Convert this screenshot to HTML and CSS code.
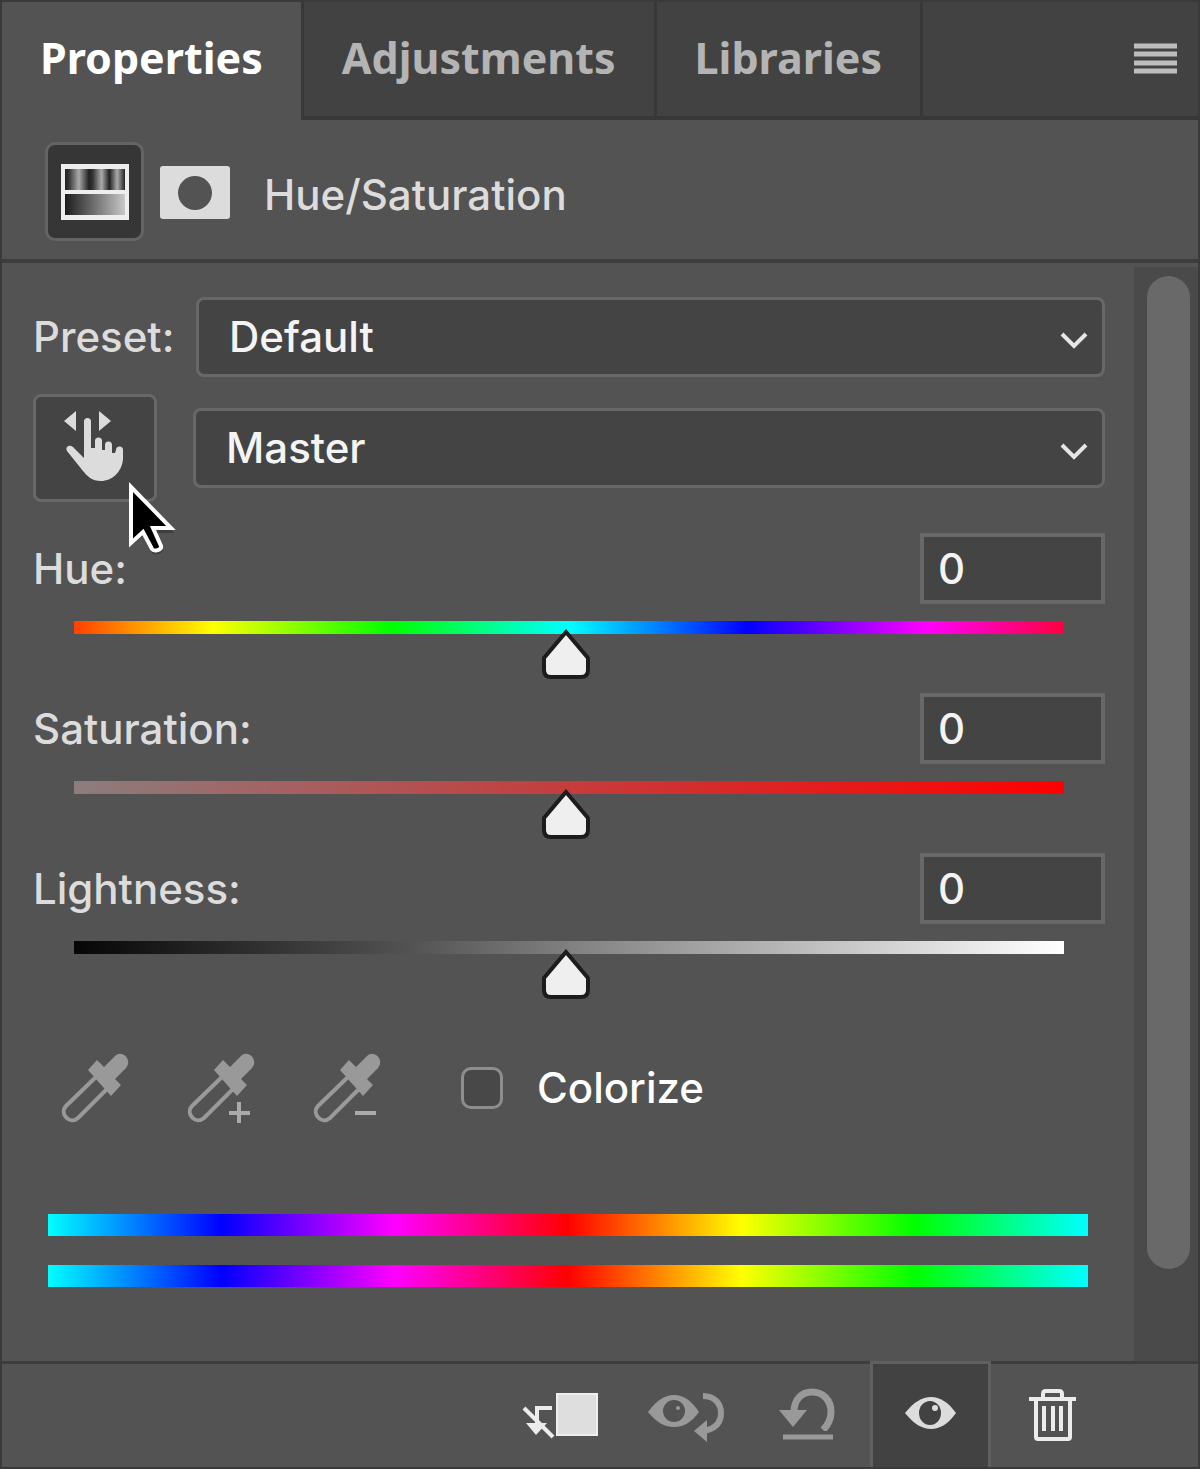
FILE: index.html
```html
<!DOCTYPE html>
<html lang="en">
<head>
<meta charset="utf-8">
<meta name="viewport" content="width=device-width, initial-scale=1">
<title>Properties</title>
<link rel="stylesheet" href="styles.css">
</head>
<body>
<div class="panel">
  <nav class="tabs" aria-label="Panels">
    <button class="tab tab-active" type="button">Properties</button>
    <button class="tab" type="button">Adjustments</button>
    <button class="tab" type="button">Libraries</button>
    <div class="tab-rest">
      <button class="menu" type="button" aria-label="Panel menu">
        <svg width="43" height="32" viewBox="0 0 43 32"><path d="M0 3h43M0 11h43M0 20h43M0 28h43" stroke="#bdbdbd" stroke-width="5"/></svg>
      </button>
    </div>
  </nav>

  <header class="heading">
    <button class="kind" type="button" aria-label="Adjustment settings">
      <svg width="68" height="56" viewBox="0 0 68 56">
        <defs>
          <linearGradient id="bands">
            <stop offset="0" stop-color="#222"/><stop offset=".06" stop-color="#333"/><stop offset=".23" stop-color="#aaa"/><stop offset=".4" stop-color="#222"/><stop offset=".46" stop-color="#333"/><stop offset=".61" stop-color="#aaa"/><stop offset=".74" stop-color="#222"/><stop offset=".87" stop-color="#aaa"/><stop offset="1" stop-color="#222"/>
          </linearGradient>
          <linearGradient id="ramp"><stop offset="0" stop-color="#1c1c1c"/><stop offset="1" stop-color="#c8c8c8"/></linearGradient>
        </defs>
        <rect width="68" height="56" fill="#eee"/>
        <rect x="4" y="5" width="60" height="21" fill="url(#bands)"/>
        <rect x="4" y="30" width="60" height="21" fill="url(#ramp)"/>
      </svg>
    </button>
    <button class="mask" type="button" aria-label="Layer mask">
      <svg width="70" height="54" viewBox="0 0 70 54"><rect width="70" height="53" rx="3" fill="#dcdcdc"/><circle cx="35" cy="27" r="17" fill="#535353"/></svg>
    </button>
    <h1 class="title">Hue/Saturation</h1>
  </header>

  <main class="body">
    <form class="controls">
      <div class="preset-row">
        <label class="label preset-label" for="preset">Preset:</label>
        <div class="select-box">
          <select id="preset" class="select"><option>Default</option></select>
          <svg class="chevron" width="28" height="18" viewBox="0 0 28 18"><path d="M2 2l12 12L26 2" fill="none" stroke="#e6e6e6" stroke-width="4"/></svg>
        </div>
      </div>
      <div class="range-row">
        <div class="tool-box">
          <button class="tool" type="button" aria-label="Drag on the image to adjust">
            <svg width="118" height="102" viewBox="3 3 118 102" fill="#dcdcdc">
              <path d="M31 27l12-10v20zM78 27L66 17v20z"/>
              <path d="M51 64V27.500a3.500 3.500 0 0 1 7 0V54h4V47a3.500 3.500 0 0 1 7 0V56h3V51a3.500 3.500 0 0 1 7 0V59h3l1-3a3.500 3.500 0 0 1 7 0v9c-1 13-11 22-22 22-9 0-14-5-18-10L34 57c-2-4 2-7 6-4z"/>
            </svg>
          </button>
          <svg class="cursor" width="54" height="80" viewBox="0 0 54 80">
            <path d="M5 6v59l12-10 9 17c2 3 11 1 11-3l-8-17h19z" fill="#000" opacity=".25"/>
            <path d="M5 6v56l12-11 9 17c2 3 10 1 9-3l-8-18h18z" fill="#000" stroke="#fff" stroke-width="4"/>
          </svg>
        </div>
        <div class="select-box">
          <select class="select" aria-label="Colour range"><option>Master</option></select>
          <svg class="chevron" width="28" height="18" viewBox="0 0 28 18"><path d="M2 2l12 12L26 2" fill="none" stroke="#e6e6e6" stroke-width="4"/></svg>
        </div>
      </div>

      <div class="slider">
        <div class="slider-head">
          <label class="label" for="hue">Hue:</label>
          <input class="number" type="text" value="0" aria-label="Hue value">
        </div>
        <input id="hue" class="range range-hue" type="range" min="-180" max="180" value="0">
      </div>
      <div class="slider">
        <div class="slider-head">
          <label class="label" for="saturation">Saturation:</label>
          <input class="number" type="text" value="0" aria-label="Saturation value">
        </div>
        <input id="saturation" class="range range-saturation" type="range" min="-100" max="100" value="0">
      </div>
      <div class="slider">
        <div class="slider-head">
          <label class="label" for="lightness">Lightness:</label>
          <input class="number" type="text" value="0" aria-label="Lightness value">
        </div>
        <input id="lightness" class="range range-lightness" type="range" min="-100" max="100" value="0">
      </div>

      <div class="pickers">
        <svg class="defs" width="0" height="0" aria-hidden="true">
          <symbol id="dropper" viewBox="0 0 72 72">
            <path d="M36 25L6 54c-7 8 4 19 12 12l30-30" fill="none" stroke="#999" stroke-width="4"/>
            <path d="M37 8l7 7L55 4c7-7 18 4 11 12L55 27l6 6-10 11-23-26z" fill="#999"/>
          </symbol>
        </svg>
        <button class="picker" type="button" aria-label="Eyedropper"><svg width="72" height="72"><use href="#dropper"/></svg></button>
        <button class="picker" type="button" aria-label="Add to sample"><svg width="72" height="72"><use href="#dropper"/><path d="M43 61h21M53 50v21" stroke="#aaa" stroke-width="4"/></svg></button>
        <button class="picker" type="button" aria-label="Subtract from sample"><svg width="72" height="72"><use href="#dropper"/><path d="M43 61h21" stroke="#aaa" stroke-width="4"/></svg></button>
        <label class="colorize"><input class="check" type="checkbox">Colorize</label>
      </div>

      <div class="spectra">
        <div class="spectrum"></div>
        <div class="spectrum"></div>
      </div>
    </form>
    <div class="scrollbar"><div class="scroll-thumb"></div></div>
  </main>

  <footer class="actions">
    <button class="action" type="button" aria-label="Clip to layer">
      <svg width="121" height="103" viewBox="0 0 121 103"><rect x="49" y="29" width="42" height="43" fill="#dedede"/><rect x="50" y="30" width="40" height="41" fill="none" stroke="#eee" stroke-width="2"/><path d="M17 44l29 29M45 44H30v18" fill="none" stroke="#ececec" stroke-width="4"/><path d="M19 59h21L29 71z" fill="#ececec"/></svg>
    </button>
    <button class="action" type="button" aria-label="View previous state">
      <svg width="121" height="103" viewBox="0 0 121 103"><path d="M20 48c9-12 17-17 26-17s17 5 25 17c-8 11-16 15-25 15s-17-4-26-15z" fill="#999"/><circle cx="46" cy="47" r="11" fill="#535353"/><circle cx="50" cy="44" r="2" fill="#999"/><path d="M75 32c12 0 18 8 18 17 0 11-7 16-17 18" fill="none" stroke="#999" stroke-width="6"/><path d="M66 67l13-11v22z" fill="#999"/></svg>
    </button>
    <button class="action" type="button" aria-label="Reset">
      <svg width="121" height="103" viewBox="0 0 121 103"><path d="M45 48C45 35 53 28 63 28c11 0 19 8 19 20 0 8-3 13-8 18" fill="none" stroke="#999" stroke-width="7"/><path d="M30 46h28L44 63z" fill="#999"/><path d="M62 67h20v4H62z" fill="#535353"/><path d="M34 73h50" stroke="#999" stroke-width="5"/></svg>
    </button>
    <button class="action action-on" type="button" aria-label="Toggle visibility">
      <svg width="115" height="103" viewBox="3 0 115 103"><path d="M35 49c9-11 17-16 26-16s17 5 25 16c-8 11-16 16-25 16s-17-5-26-16z" fill="#dcdcdc"/><ellipse cx="60" cy="49" rx="11" ry="12" fill="#424242"/><circle cx="65" cy="44" r="3" fill="#dcdcdc"/></svg>
    </button>
    <button class="action" type="button" aria-label="Delete">
      <svg width="121" height="103" viewBox="0 0 121 103" fill="none" stroke="#ececec" stroke-width="4"><path d="M38 35h47M52 35v-5q0-3 3-3h13q3 0 3 3v5M45 35v38q0 2 2 2h30q2 0 2-2V35M53 42v25M62 42v25M70 42v25"/></svg>
    </button>
  </footer>
</div>
</body>
</html>
```
FILE: styles.css
```css
* { box-sizing: border-box; }

body {
  margin: 0;
  background: #535353;
  color: #dcdcdc;
  font: 500 42px/48px Inter, "Liberation Sans", sans-serif;
}

button {
  margin: 0;
  padding: 0;
  border: 0;
  background: none;
  color: inherit;
  font: inherit;
}

svg { display: block; }

.panel {
  display: flex;
  flex-direction: column;
  min-height: 100vh;
  border: 2px solid #3a3a3a;
}

/* Tabs */
.tabs { display: flex; height: 118px; }

.tab {
  padding: 0 38px 2px;
  border-right: 3px solid #383838;
  border-bottom: 4px solid #383838;
  background: #424242;
  color: #b4b4b4;
  font: 700 43px/48px "Noto Sans", "Open Sans", sans-serif;
}

.tab-active {
  padding-bottom: 6px;
  border-bottom: 0;
  background: #535353;
  color: #fff;
}

.tab-rest {
  display: flex;
  flex: 1;
  justify-content: flex-end;
  align-items: center;
  padding-right: 21px;
  border-bottom: 4px solid #383838;
  background: #424242;
}

/* Heading */
.heading {
  display: flex;
  align-items: center;
  height: 143px;
  padding: 0 43px;
  border-bottom: 4px solid #3d3d3d;
}

.kind {
  display: grid;
  place-items: center;
  width: 99px;
  height: 99px;
  margin-top: 4px;
  border: 3px solid #646464;
  border-radius: 10px;
  background: #363636;
}

.mask { margin: 6px 34px 0 16px; }

.title {
  margin: 10px 0 0;
  font-size: 42px;
  font-weight: 500;
}

/* Controls */
.body { display: flex; flex: 1; }

.controls {
  flex: 1;
  min-width: 0;
  padding: 34px 29px 74px 31px;
}

.preset-row, .range-row, .slider-head, .pickers {
  display: flex;
  align-items: center;
}

.preset-label { width: 163px; }

.range-row { gap: 36px; margin-top: 17px; }

.select-box {
  display: grid;
  flex: 1;
  align-items: center;
}

.select {
  grid-area: 1 / 1;
  width: 100%;
  height: 80px;
  padding: 0 60px 0 30px;
  border: 3px solid #686868;
  border-radius: 8px;
  background: #444;
  color: #f4f4f4;
  font: inherit;
  appearance: none;
}

.chevron {
  grid-area: 1 / 1;
  justify-self: end;
  margin: 8px 17px 0 0;
  pointer-events: none;
}

.tool-box { position: relative; }

.tool {
  display: block;
  width: 124px;
  height: 108px;
  border: 3px solid #686868;
  border-radius: 8px;
  background: #444;
}

.cursor {
  position: absolute;
  top: 87px;
  left: 93px;
  pointer-events: none;
}

.slider { margin-top: 14px; }
.range-row + .slider { margin-top: 31px; }

.slider-head { justify-content: space-between; }

.number {
  width: 185px;
  height: 71px;
  padding: 0 14px;
  border: 4px solid #686868;
  border-radius: 0;
  background: #444;
  color: #f4f4f4;
  font: inherit;
}

.range {
  display: block;
  width: calc(100% - 82px);
  height: 58px;
  margin: 17px 41px 0;
  background: none;
  appearance: none;
}

.range::-webkit-slider-runnable-track {
  align-self: flex-start;
  height: 13px;
  background: var(--track);
}

.range::-webkit-slider-thumb {
  width: 56px;
  height: 50px;
  margin-top: 8px;
  background: url("data:image/svg+xml,%3Csvg xmlns='http://www.w3.org/2000/svg' width='56' height='50'%3E%3Cpath d='M25 3L47 29v12q0 7-7 7H10q-7 0-7-7V29z' fill='%23efefef' stroke='%231c1c1c' stroke-width='4'/%3E%3C/svg%3E") no-repeat;
  appearance: none;
}

.range-hue { --track: linear-gradient(90deg, #ff4000, #ff0 14%, #0f0 32%, #0ff 50%, #00f 68%, #f0f 86%, #ff0040); }
.range-saturation { --track: linear-gradient(90deg, #8c7d7d, #c63c3c 50%, #f00); }
.range-lightness { --track: linear-gradient(90deg, #060606, #535353 34%, #808080 50%, #fff); }

.pickers { margin-top: 53px; padding-left: 27px; }

.defs { position: absolute; }

.picker { margin-right: 54px; }

.colorize {
  display: flex;
  align-items: center;
  gap: 34px;
  margin-left: 23px;
  color: #fff;
}

.check {
  width: 42px;
  height: 42px;
  margin: 0;
  border: 3px solid #8e8e8e;
  border-radius: 10px;
  background: #484848;
  appearance: none;
}

.spectra {
  display: grid;
  gap: 29px;
  margin: 90px 17px 0 15px;
}

.spectrum {
  height: 22px;
  background: linear-gradient(90deg, #0ff, #00f, #f0f, #f00, #ff0, #0f0, #0ff);
}

.scrollbar {
  display: flex;
  width: 64px;
  margin-top: 4px;
  padding: 9px 8px 92px 13px;
  background: #4a4a4a;
}

.scroll-thumb {
  flex: 1;
  border-radius: 22px;
  background: #696969;
}

/* Footer actions */
.actions {
  display: flex;
  justify-content: flex-end;
  height: 106px;
  padding-right: 86px;
  border-top: 3px solid #3d3d3d;
}

.action { width: 121px; }

.action-on {
  margin-top: -3px;
  border: 3px solid #606060;
  border-bottom: 0;
  background: #424242;
}
```
